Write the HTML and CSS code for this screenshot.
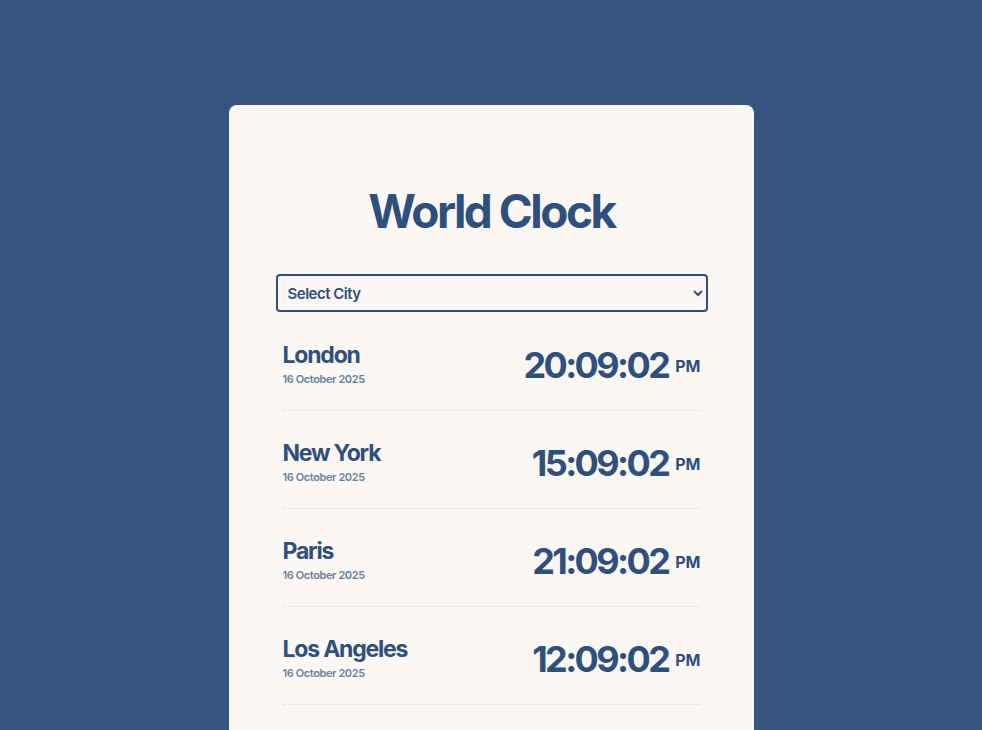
FILE: index.html
```html
<!DOCTYPE html>
<html lang="en">
<head>
    <meta charset="UTF-8">
    <meta name="viewport" content="width=device-width, initial-scale=1.0">
    <title>World Clock</title>
    <link rel="stylesheet" href="styles.css">
</head>
<body>
    <div class="page">
        <div class="clock-card">
            <h1>World Clock</h1>

            <select id="city">
                <option value="">Select City</option>
                <option value="Asia/Tokyo">Tokyo</option>
                <option value="Australia/Sydney">Sydney</option>
            </select>

            <div class="city-list">
                <div class="city-row">
                    <div class="city-info">
                        <h2>London</h2>
                        <div class="date">16 October 2025</div>
                    </div>
                    <div class="time">20:09:02 <small>PM</small></div>
                </div>
                <div class="city-row">
                    <div class="city-info">
                        <h2>New York</h2>
                        <div class="date">16 October 2025</div>
                    </div>
                    <div class="time">15:09:02 <small>PM</small></div>
                </div>
                <div class="city-row">
                    <div class="city-info">
                        <h2>Paris</h2>
                        <div class="date">16 October 2025</div>
                    </div>
                    <div class="time">21:09:02 <small>PM</small></div>
                </div>
                <div class="city-row">
                    <div class="city-info">
                        <h2>Los Angeles</h2>
                        <div class="date">16 October 2025</div>
                    </div>
                    <div class="time">12:09:02 <small>PM</small></div>
                </div>
            </div>
        </div>
    </div>
</body>
</html>
```

FILE: styles.css
```css
* {
    margin: 0;
    padding: 0;
    box-sizing: border-box;
    font-family: 'Inter', sans-serif;
}

body {
    background: #355480;
    color: #30507c;
}

.page {
    padding-top: 105px;
}

.clock-card {
    width: 525px;
    margin: 0 auto;
    background: #fbf7f4;
    border-radius: 8px;
    padding: 78px 46px 40px 47px;
}

h1 {
    text-align: center;
    font-size: 46px;
    font-weight: 700;
    letter-spacing: -2.5px;
    line-height: 56px;
    margin-bottom: 35px;
}

select {
    width: 100%;
    height: 38px;
    padding: 0 6px;
    border: 2px solid #30507c;
    border-radius: 4px;
    background: #fbf7f4;
    color: #30507c;
    font-size: 15px;
    font-weight: 600;
    letter-spacing: -0.5px;
}

.city-list {
    padding: 0 7px;
    margin-top: 1px;
}

.city-row {
    display: flex;
    justify-content: space-between;
    align-items: center;
    height: 98px;
    border-bottom: 1px dotted #dcdcdc;
}

.city-info {
    padding-top: 5px;
}

.city-info h2 {
    font-size: 23px;
    font-weight: 700;
    letter-spacing: -1.2px;
    line-height: 26px;
}

.date {
    font-size: 11px;
    font-weight: 600;
    color: #6a7f9e;
    letter-spacing: -0.4px;
    margin-top: 4px;
}

.time {
    display: flex;
    align-items: center;
    gap: 7px;
    font-size: 36px;
    font-weight: 700;
    letter-spacing: -2.6px;
    margin-top: 6px;
}

.time small {
    font-size: 16px;
    letter-spacing: 0;
    margin-top: 2px;
}
```
